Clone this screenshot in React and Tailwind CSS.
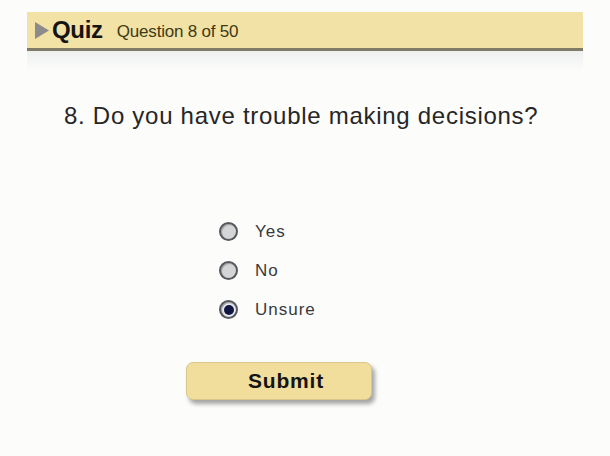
const Radio = ({ label, checked }) => (
  <label className="flex items-center gap-[17px] h-[39px]">
    <span className="w-[19px] h-[19px] rounded-full border-[2px] border-[#55585c] bg-[#d4d5d6] flex items-center justify-center shadow-[inset_1px_1px_1px_rgba(0,0,0,0.25)]">
      {checked && <span className="w-[10px] h-[10px] rounded-full bg-[#0f1640] ring-[1.5px] ring-[#e8e9ee]" />}
    </span>
    <span className="text-[17px] text-[#3a3a3a] tracking-[1px]">{label}</span>
  </label>
);

export default function App() {
  return (
    <div className="w-[610px] h-[456px] bg-[#fcfcfb] pt-[12px] font-['Liberation_Sans',Arial,sans-serif]">
      <div className="mx-[27px]">
        <div className="h-[39px] bg-[#f3e2a5] border-b-[3px] border-[#7f7b66] flex items-center pl-[8px]">
          <svg width="14" height="17" viewBox="0 0 14 17" className="mr-[3px]">
            <path d="M0 0 L14 8.5 L0 17 Z" fill="#8b8b8b" />
          </svg>
          <span className="text-[24px] font-bold text-[#161412] tracking-[-0.3px]">Quiz</span>
          <span className="ml-[14px] text-[17px] text-[#3d3a16] tracking-[-0.2px] mt-[3px]">Question 8 of 50</span>
        </div>
        <div className="h-[20px] bg-gradient-to-b from-[#eef0f0] to-[#fcfcfb]" />
      </div>
      <div className="pl-[64px] pt-[27px] text-[24px] text-[#262626] tracking-[0.72px]">
        8. Do you have trouble making decisions?
      </div>
      <div className="pl-[219px] pt-[78px] flex flex-col">
        <Radio label="Yes" />
        <Radio label="No" />
        <Radio label="Unsure" checked />
      </div>
      <div className="pl-[186px] pt-[33px]">
        <button className="w-[186px] h-[38px] pl-[14px] rounded-[7px] bg-[#f1dd9c] border border-[#d8c68a] shadow-[3px_4px_4px_rgba(0,0,0,0.35)] text-[21px] font-bold text-[#141414] tracking-[0.8px]">
          Submit
        </button>
      </div>
    </div>
  );
}
